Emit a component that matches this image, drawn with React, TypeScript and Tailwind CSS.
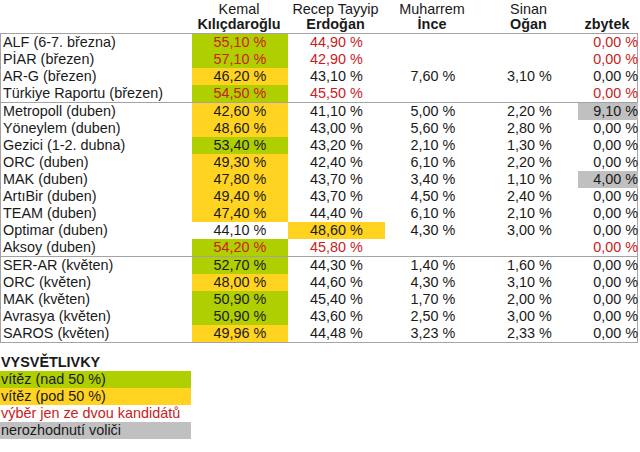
import React from "react";

const GREEN = "bg-[#b0cf00]";
const YELLOW = "bg-[#ffd320]";
const GRAY = "bg-[#c0c0c0]";

type Cell = { v: string; bg?: string };
type Row = { name: string; red?: boolean; k: Cell; e: Cell; i: string; o: string; z: Cell };

const groups: Row[][] = [
  [
    { name: "ALF (6-7. března)", red: true, k: { v: "55,10 %", bg: GREEN }, e: { v: "44,90 %" }, i: "", o: "", z: { v: "0,00 %" } },
    { name: "PİAR (březen)", red: true, k: { v: "57,10 %", bg: GREEN }, e: { v: "42,90 %" }, i: "", o: "", z: { v: "0,00 %" } },
    { name: "AR-G (březen)", k: { v: "46,20 %", bg: YELLOW }, e: { v: "43,10 %" }, i: "7,60 %", o: "3,10 %", z: { v: "0,00 %" } },
    { name: "Türkiye Raportu (březen)", red: true, k: { v: "54,50 %", bg: GREEN }, e: { v: "45,50 %" }, i: "", o: "", z: { v: "0,00 %" } },
  ],
  [
    { name: "Metropoll (duben)", k: { v: "42,60 %", bg: YELLOW }, e: { v: "41,10 %" }, i: "5,00 %", o: "2,20 %", z: { v: "9,10 %", bg: GRAY } },
    { name: "Yöneylem (duben)", k: { v: "48,60 %", bg: YELLOW }, e: { v: "43,00 %" }, i: "5,60 %", o: "2,80 %", z: { v: "0,00 %" } },
    { name: "Gezici (1-2. dubna)", k: { v: "53,40 %", bg: GREEN }, e: { v: "43,20 %" }, i: "2,10 %", o: "1,30 %", z: { v: "0,00 %" } },
    { name: "ORC (duben)", k: { v: "49,30 %", bg: YELLOW }, e: { v: "42,40 %" }, i: "6,10 %", o: "2,20 %", z: { v: "0,00 %" } },
    { name: "MAK (duben)", k: { v: "47,80 %", bg: YELLOW }, e: { v: "43,70 %" }, i: "3,40 %", o: "1,10 %", z: { v: "4,00 %", bg: GRAY } },
    { name: "ArtıBir (duben)", k: { v: "49,40 %", bg: YELLOW }, e: { v: "43,70 %" }, i: "4,50 %", o: "2,40 %", z: { v: "0,00 %" } },
    { name: "TEAM (duben)", k: { v: "47,40 %", bg: YELLOW }, e: { v: "44,40 %" }, i: "6,10 %", o: "2,10 %", z: { v: "0,00 %" } },
    { name: "Optimar (duben)", k: { v: "44,10 %" }, e: { v: "48,60 %", bg: YELLOW }, i: "4,30 %", o: "3,00 %", z: { v: "0,00 %" } },
    { name: "Aksoy (duben)", red: true, k: { v: "54,20 %", bg: GREEN }, e: { v: "45,80 %" }, i: "", o: "", z: { v: "0,00 %" } },
  ],
  [
    { name: "SER-AR (květen)", k: { v: "52,70 %", bg: GREEN }, e: { v: "44,30 %" }, i: "1,40 %", o: "1,60 %", z: { v: "0,00 %" } },
    { name: "ORC (květen)", k: { v: "48,00 %", bg: YELLOW }, e: { v: "44,60 %" }, i: "4,30 %", o: "3,10 %", z: { v: "0,00 %" } },
    { name: "MAK (květen)", k: { v: "50,90 %", bg: GREEN }, e: { v: "45,40 %" }, i: "1,70 %", o: "2,00 %", z: { v: "0,00 %" } },
    { name: "Avrasya (květen)", k: { v: "50,90 %", bg: GREEN }, e: { v: "43,60 %" }, i: "2,50 %", o: "3,00 %", z: { v: "0,00 %" } },
    { name: "SAROS (květen)", k: { v: "49,96 %", bg: YELLOW }, e: { v: "44,48 %" }, i: "3,23 %", o: "2,33 %", z: { v: "0,00 %" } },
  ],
];

const cols = "grid grid-cols-[191px_96px_97px_96px_97px_60px]";

function DataRow({ r }: { r: Row }) {
  const tone = r.red ? "text-[#c9211e]" : "text-[#1a1a1a]";
  return (
    <div className={`${cols} h-[17px] leading-[17px]`}>
      <div className="pl-[2px] text-[#1a1a1a] whitespace-nowrap">{r.name}</div>
      <div className={`text-center ${tone} ${r.k.bg ?? ""}`}>{r.k.v}</div>
      <div className={`text-center ${tone} ${r.e.bg ?? ""}`}>{r.e.v}</div>
      <div className="text-center text-[#1a1a1a]">{r.i}</div>
      <div className="text-center text-[#1a1a1a]">{r.o}</div>
      <div className={`text-right whitespace-nowrap ${tone} ${r.z.bg ?? ""}`}>{r.z.v}</div>
    </div>
  );
}

export default function App() {
  return (
    <div className="w-[640px] h-[452px] bg-white text-[14.4px] font-['Liberation_Sans',Arial,sans-serif] text-[#1a1a1a] overflow-hidden">
      {/* Header */}
      <div className={`${cols} pt-[2px] h-[33px] leading-[15px]`}>
        <div />
        <div className="text-center">
          <div>Kemal</div>
          <div className="font-bold">Kılıçdaroğlu</div>
        </div>
        <div className="text-center">
          <div>Recep Tayyip</div>
          <div className="font-bold">Erdoğan</div>
        </div>
        <div className="text-center">
          <div>Muharrem</div>
          <div className="font-bold">İnce</div>
        </div>
        <div className="text-center">
          <div>Sinan</div>
          <div className="font-bold">Oğan</div>
        </div>
        <div className="text-center">
          <div>&nbsp;</div>
          <div className="font-bold">zbytek</div>
        </div>
      </div>

      {/* Table body */}
      <div className="w-[638px] border border-[#a3a3a3]">
        {groups.map((g, gi) => (
          <div key={gi} className={gi > 0 ? "border-t border-[#a3a3a3]" : ""}>
            {g.map((r) => (
              <DataRow key={r.name} r={r} />
            ))}
          </div>
        ))}
      </div>

      {/* Legend */}
      <div className="mt-[11px] w-[191px] leading-[17px] whitespace-nowrap">
        <div className="h-[17px] font-bold pl-[1px]">VYSVĚTLIVKY</div>
        <div className={`h-[17px] pl-[1px] ${GREEN}`}>vítěz (nad 50 %)</div>
        <div className={`h-[17px] pl-[1px] ${YELLOW}`}>vítěz (pod 50 %)</div>
        <div className="h-[17px] pl-[1px] text-[#c9211e]">výběr jen ze dvou kandidátů</div>
        <div className={`h-[17px] pl-[1px] ${GRAY}`}>nerozhodnutí voliči</div>
      </div>
    </div>
  );
}
